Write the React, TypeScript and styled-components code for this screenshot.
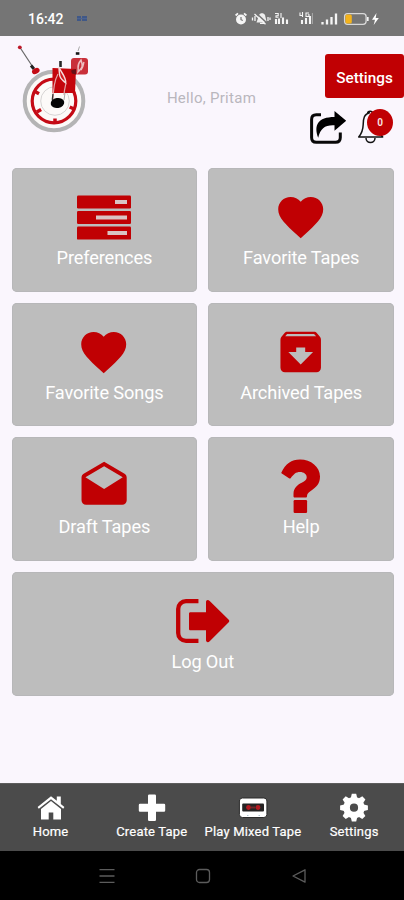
import React from "react";
import styled, { createGlobalStyle } from "styled-components";

const RED = "#c00003";

const GlobalStyle = createGlobalStyle`
  * { box-sizing: border-box; }
  body { margin: 0; background: #faf6fd; font-family: Roboto, "Liberation Sans", sans-serif; }
  button { font: inherit; border: 0; padding: 0; cursor: pointer; }
  svg { display: block; flex: none; }
`;

const Screen = styled.div`
  width: 404px;
  height: 900px;
  display: flex;
  flex-direction: column;
  overflow: hidden;
  background: #faf6fd;
`;

const StatusBar = styled.header`
  height: 36px;
  flex: none;
  display: flex;
  align-items: center;
  justify-content: space-between;
  padding: 1px 24px 0 28px;
  background: #757575;
  color: #fff;
`;

const ClockGroup = styled.div`
  display: flex;
  align-items: center;
  gap: 13px;
  font-size: 14px;
  font-weight: 500;
`;

const Header = styled.section`
  height: 132px;
  flex: none;
  display: grid;
  grid-template-columns: 110px 1fr 110px;
`;

const LogoArea = styled.div`
  padding: 4px 0 0 10px;
`;

const Greeting = styled.div`
  padding: 52px 0 0 19px;
  text-align: center;
  font-size: 15px;
  line-height: 20px;
  letter-spacing: 0.28px;
  color: #b9b7bd;
  white-space: nowrap;
`;

const HeaderActions = styled.div`
  display: flex;
  flex-direction: column;
  align-items: flex-end;
  padding-top: 18px;
`;

const SettingsButton = styled.button`
  && {
    width: 79px;
    height: 44px;
    padding-top: 3px;
    border-radius: 3px;
    background: ${RED};
    color: #fff;
    font-size: 15.3px;
    font-weight: 500;
  }
`;

const ActionRow = styled.div`
  display: flex;
  margin-top: 9px;
  padding-right: 9px;
  gap: 10px;
`;

const BellButton = styled.div`
  position: relative;
  width: 38px;
  height: 38px;
`;

const CountBadge = styled.span`
  position: absolute;
  top: 2px;
  left: 10px;
  width: 26px;
  height: 27px;
  border-radius: 50%;
  background: ${RED};
  color: #f7dede;
  font-size: 10px;
  font-weight: 700;
  line-height: 28px;
  text-align: center;
`;

const TileGrid = styled.main`
  flex: 1;
  display: grid;
  grid-template-columns: 1fr 1fr;
  grid-auto-rows: 123.8px;
  gap: 10.9px 11px;
  padding: 0 10px 0 11.5px;
`;

const Tile = styled.button<{ $wide?: boolean }>`
  grid-column: ${(p) => (p.$wide ? "1 / -1" : "auto")};
  display: flex;
  flex-direction: column;
  align-items: center;
  justify-content: flex-start;
  padding-top: 22px;
  border-radius: 5px;
  background: #bdbdbd;
  box-shadow: inset 0 0 0 1px #b7b7b9;
  color: #fff;
`;

const TileLabel = styled.span`
  margin-top: 2px;
  font-size: 18.2px;
  line-height: 24px;
  letter-spacing: -0.13px;
  white-space: nowrap;
`;

const BottomNav = styled.nav`
  height: 68px;
  flex: none;
  display: grid;
  grid-template-columns: repeat(4, 101.2px);
  background: #4b4b4b;
  border-top: 1px solid #5d5d5d;
`;

const NavItem = styled.a`
  display: flex;
  flex-direction: column;
  align-items: center;
  padding-top: 9px;
  color: #fff;
`;

const NavLabel = styled.span`
  font-size: 13px;
  line-height: 18px;
  letter-spacing: 0.18px;
  -webkit-text-stroke: 0.2px #fff;
  white-space: nowrap;
`;

const SystemBar = styled.footer`
  height: 49px;
  flex: none;
  display: flex;
  align-items: center;
  justify-content: space-between;
  padding: 0 97px 0 99px;
  background: #000;
`;

const StatusIcons = () => (
  <svg width="148" height="20" viewBox="232 9 148 20" fill="none" stroke="#f5f5f5">
    <circle cx="241" cy="19.5" r="4" fill="#f5f5f5" strokeWidth="2" />
    <path d="M235.6 15.5l2.4-2.2M246.4 15.5l-2.4-2.2" strokeWidth="1.8" />
    <path d="M241 17v2.7l1.8.8" stroke="#757575" strokeWidth="1.2" />
    <path d="M256.5 22.5h8l2-1.3-1.5-6c-1-2.6-5-2.6-6 0z" fill="#eee" stroke="none" />
    <path d="M256 13l12 11" stroke="#757575" strokeWidth="1.6" />
    <path d="M254.5 14l11 10.2M252.5 17.5v3M255 16v5M268 17v4M270 17.5v2.5M260 23.3h4" strokeWidth="1.3" />
    <path d="M275 13.5h3.2v2.2H276v1.5h2.5M281 13v5" strokeWidth="1.1" />
    <path d="M276 19v5M279 18.5V24M283 17.5V24M287 19.5V24" strokeWidth="2.1" />
    <path d="M300 12.5v3h3M302.5 12v5M309 13h-3v3.5h3v-1.7h-1.2" strokeWidth="1.1" />
    <path d="M302 20v4M306 18v6M310 16v8" strokeWidth="2.1" />
    <path d="M312.4 13v11" stroke="#aaa" strokeWidth="1" />
    <path d="M322.5 22v2.5M327 19.5v5M331.5 17v7.5M336 13.5v11" strokeWidth="2.3" />
    <rect x="344.6" y="13.7" width="21.5" height="10.6" rx="3" stroke="#d8d8d8" strokeWidth="1.3" />
    <path d="M367.8 17v4" strokeWidth="1.7" />
    <rect x="345.4" y="14.5" width="6.4" height="9" rx="1.5" fill="#f4b31b" stroke="none" />
    <path d="M376.5 13l-4.5 6.7h3l-1.3 5.3 5.1-7h-3.1z" fill="#fff" stroke="none" />
  </svg>
);

const Logo = () => (
  <svg width="90" height="96" viewBox="10 40 90 96" fill="none">
    <circle cx="54" cy="101" r="29.3" stroke="#b4b4b5" strokeWidth="4" fill="#fcfaf8" />
    <circle cx="54" cy="101" r="21.8" stroke="#c50b15" strokeWidth="3.2" />
    <circle cx="55" cy="101" r="14.3" stroke="#d7d5d4" strokeWidth="1" />
    <path d="M35 91.5l4 2.3M36.8 112l4.3-2.5M55 123v-4.5M74 109l-4.3-2" stroke="#c50b15" strokeWidth="3.5" />
    <path d="M20 47.5L33.5 68" stroke="#666" strokeWidth="1.2" />
    <circle cx="19.8" cy="47.3" r="1.9" fill="#bd1828" />
    <path d="M31 65.5l3 3.5" stroke="#222" strokeWidth="3" />
    <ellipse cx="35.8" cy="71" rx="4" ry="2.8" transform="rotate(-25 35.8 71)" fill="#c30b15" />
    <rect x="71" y="58" width="17" height="16.5" rx="3" fill="#c9303a" />
    <path d="M81 60c-5 6-2 7-3 12 5-5 5-6 3-12zM84 62c-1 2 0 4-3 8" stroke="#edbfc1" strokeWidth="1.5" />
    <path d="M75.8 53.5h3.6" stroke="#171717" strokeWidth="2.6" />
    <path d="M78 51l1.5-4.5" stroke="#aaa" />
    <path d="M52.5 68l23.5 1-1 24H52.5z" fill="#c4050c" />
    <path d="M71 70.5l5-1.5v5.5l-4-1z" fill="#671017" />
    <path d="M60.5 67v-6" stroke="#262626" strokeWidth="2.6" />
    <path d="M59 67c2 6 7 9 6.7 16-3-3-6-4-6.2-9-.4-3-.5-4-.5-7z" fill="#d31b21" stroke="#f4dddd" strokeWidth="1.4" />
    <path d="M58 74c-4 7-5 17-5 28M66 83c-1 5-2 8-2 12" stroke="#e2a4a6" strokeWidth="1.2" />
    <path d="M53 94c-1 4-1 7 0 11" stroke="#333" strokeWidth="1.3" />
    <ellipse cx="57.5" cy="103" rx="6.8" ry="5" transform="rotate(-10 57.5 103)" fill="#050505" />
    <path d="M65 93l-1 7" stroke="#aaa" />
  </svg>
);

const ShareIcon = () => (
  <svg width="38" height="38" viewBox="309 107 38 38" fill="none">
    <path d="M321 114.8h-4.7c-3 0-4.7 1.7-4.7 4.7v18c0 3 1.7 4.8 4.7 4.8h19.2c3 0 4.8-1.8 4.8-4.8v-5" stroke="#080808" strokeWidth="3" />
    <path d="M334.5 111l11.7 9.7-11.7 10v-5.5c-9.5-.5-14 3-16.3 12.5-4.6-12-.5-20.6 16.3-20.6z" fill="#000" />
  </svg>
);

const BellIcon = () => (
  <svg width="38" height="38" viewBox="357 107 38 38" fill="none" stroke="#111" strokeWidth="1.5" strokeLinejoin="round">
    <path d="M370 112.5c-6 1.5-6.7 6-6.8 12-.2 6-1.5 9-4.5 12.5h24c-3-3.5-4-7-4.3-12M366 138c0 6 9 6 9 0M367.5 113.8c.2-3.5 5-3.5 5.3 0" />
  </svg>
);

const TileSvg = ({ children }: { children: React.ReactNode }) => (
  <svg width="54" height="54" viewBox="0 0 54 54" fill={RED}>{children}</svg>
);

const PreferencesIcon = () => (
  <TileSvg>
    <rect x="0" y="5.5" width="54" height="13" rx="1.2" />
    <rect x="0" y="21" width="54" height="13" rx="1.2" />
    <rect x="0" y="36.6" width="54" height="13" rx="1.2" />
    <path fill="#d9c3c3" d="M38 10h12v4H38zM19 25.5h31v4H19zM30.5 41H50v4H30.5z" />
  </TileSvg>
);

const HeartIcon = () => (
  <TileSvg>
    <path transform="translate(-.3 .2) scale(2.25)" d="M12 21.35l-1.45-1.32C5.4 15.36 2 12.28 2 8.5 2 5.42 4.42 3 7.5 3c1.74 0 3.41.81 4.5 2.09C13.09 3.81 14.76 3 16.5 3 19.58 3 22 5.42 22 8.5c0 3.78-3.4 6.86-8.55 11.54L12 21.35z" />
  </TileSvg>
);

const ArchiveIcon = () => (
  <TileSvg>
    <path transform="translate(-.3 0) scale(2.25)" d="M20.54 5.23l-1.39-1.68C18.88 3.21 18.47 3 18 3H6c-.47 0-.88.21-1.16.55L3.46 5.23C3.17 5.57 3 6.02 3 6.5V19c0 1.1.9 2 2 2h14c1.1 0 2-.9 2-2V6.5c0-.48-.17-.93-.46-1.27zM12 17.5L6.5 12H10v-2h4v2h3.5L12 17.5zM5.12 5l.81-1h12l.94 1H5.12z" />
  </TileSvg>
);

const DraftIcon = () => (
  <TileSvg>
    <path transform="translate(0 .5) scale(2.26)" d="M21.99 8c0-.72-.37-1.35-.94-1.7L12 1 2.95 6.3C2.38 6.65 2 7.28 2 8v10c0 1.1.9 2 2 2h16c1.1 0 2-.9 2-2l-.01-10zM12 13L3.74 7.84 12 3l8.26 4.84L12 13z" />
  </TileSvg>
);

const HelpIcon = () => (
  <TileSvg>
    <path d="M7.4 13.5C11.5 5 17.5.6 26 .6c11 0 20 7.4 20 17 0 7-3.5 10.8-9.3 14.3-2.6 1.6-3.7 3.2-3.7 5.3 0 .8-.5 1.3-1.3 1.3H20.8c-.8 0-1.3-.5-1.3-1.3v-2.5c0-5.3 3.8-9 8.2-11 3.4-1.6 5-3.1 5-5.5 0-3-3-5.2-6.6-5.2-4.5 0-6.2 2.1-9.3 6-.5.6-1.2.7-1.8.2l-7.2-4.6c-.6-.4-.7-.7-.4-1.1z" />
    <rect x="19.6" y="41" width="13.5" height="13" rx="1.2" />
  </TileSvg>
);

const LogoutIcon = () => (
  <TileSvg>
    <path d="M20.3 7.2H10c-4.5 0-7.8 3.3-7.8 7.8v24c0 4.5 3.3 7.8 7.8 7.8h10.3" fill="none" stroke={RED} strokeWidth="4.3" strokeLinecap="square" />
    <path d="M14.5 18.2H30V8.3c0-2.3 2-2.9 3.7-1.2l18.8 18.4c1 1 1 2 0 3L33.7 47.3c-1.7 1.7-3.7 1-3.7-1.2v-9.9H14.5c-1 0-1.5-.5-1.5-1.5v-15c0-1 .5-1.5 1.5-1.5z" />
  </TileSvg>
);

const NavSvg = ({ children }: { children: React.ReactNode }) => (
  <svg width="30" height="30" viewBox="0 0 30 30" fill="#fff">{children}</svg>
);

const HomeIcon = () => (
  <NavSvg>
    <path d="M15 3.2L1.6 14.1l1.2 1.6L15 6.3l12.2 9.4 1.2-1.6-3.6-3V3.6h-4v4.2z" />
    <path d="M15 8L5 16v10.5h7.7v-7h4.6v7H25V16z" />
  </NavSvg>
);

const PlusIcon = () => (
  <NavSvg>
    <path d="M12.2 1.5h5.6q1.2 0 1.2 1.2v8h8q1.2 0 1.2 1.2v5.7q0 1.2-1.2 1.2h-8v8q0 1.2-1.2 1.2h-5.6q-1.2 0-1.2-1.2v-8H3q-1.2 0-1.2-1.2v-5.7q0-1.2 1.2-1.2h8v-8q0-1.2 1.2-1.2z" />
  </NavSvg>
);

const CassetteIcon = () => (
  <NavSvg>
    <rect x="1.4" y="5" width="27.5" height="19.5" rx="3" stroke="#2b2b2b" strokeWidth="1" />
    <rect x="4.2" y="10.5" width="21.8" height="8" rx="1" fill="#252323" />
    <circle cx="10.5" cy="14.5" r="2.4" fill="#b41a21" />
    <circle cx="20" cy="14.5" r="2.4" fill="#b41a21" />
    <path d="M13 14.5h4.5" stroke="#71272a" strokeWidth="2" />
    <path d="M9 22.5h1.5M20.5 22.5H22" stroke="#b1c6d1" />
  </NavSvg>
);

const GearIcon = () => (
  <NavSvg>
    <circle cx="15" cy="14.7" r="7.4" fill="none" stroke="#fff" strokeWidth="6.6" />
    {[0, 45, 90, 135, 180, 225, 270, 315].map((angle) => (
      <path key={angle} transform={`rotate(${angle} 15 14.7)`} d="M11.8 5l1-4.2h4.4l1 4.2z" />
    ))}
  </NavSvg>
);

const tiles = [
  { label: "Preferences", Icon: PreferencesIcon },
  { label: "Favorite Tapes", Icon: HeartIcon },
  { label: "Favorite Songs", Icon: HeartIcon },
  { label: "Archived Tapes", Icon: ArchiveIcon },
  { label: "Draft Tapes", Icon: DraftIcon },
  { label: "Help", Icon: HelpIcon },
  { label: "Log Out", Icon: LogoutIcon, wide: true },
];

const navItems = [
  { label: "Home", Icon: HomeIcon },
  { label: "Create Tape", Icon: PlusIcon },
  { label: "Play Mixed Tape", Icon: CassetteIcon },
  { label: "Settings", Icon: GearIcon },
];

export default function App() {
  return (
    <>
      <GlobalStyle />
      <Screen>
        <StatusBar>
          <ClockGroup>
            16:42
            <svg width="10" height="6" viewBox="0 0 10 6">
              <path d="M0 0h4v5H0zM5 0h5v5H5z" fill="#405887" />
              <path d="M0 2.5h10" stroke="#4d6390" />
            </svg>
          </ClockGroup>
          <StatusIcons />
        </StatusBar>
        <Header>
          <LogoArea><Logo /></LogoArea>
          <Greeting>Hello, Pritam</Greeting>
          <HeaderActions>
            <SettingsButton>Settings</SettingsButton>
            <ActionRow>
              <ShareIcon />
              <BellButton>
                <BellIcon />
                <CountBadge>0</CountBadge>
              </BellButton>
            </ActionRow>
          </HeaderActions>
        </Header>
        <TileGrid>
          {tiles.map(({ label, Icon, wide }) => (
            <Tile key={label} $wide={wide}>
              <Icon />
              <TileLabel>{label}</TileLabel>
            </Tile>
          ))}
        </TileGrid>
        <BottomNav>
          {navItems.map(({ label, Icon }) => (
            <NavItem key={label}>
              <Icon />
              <NavLabel>{label}</NavLabel>
            </NavItem>
          ))}
        </BottomNav>
        <SystemBar>
          <svg width="16" height="16" viewBox="0 0 16 16" stroke="#5c5c5c" strokeWidth="1.3">
            <path d="M.5 1.7h15M.5 8h15M.5 14.3h15" />
          </svg>
          <svg width="16" height="16" viewBox="0 0 16 16" fill="none" stroke="#5c5c5c" strokeWidth="1.3">
            <rect x="1.5" y="1.5" width="13" height="13" rx="3" />
          </svg>
          <svg width="16" height="16" viewBox="0 0 16 16" fill="none" stroke="#5c5c5c" strokeWidth="1.3" strokeLinejoin="round">
            <path d="M14 1.8v12.4L2 8z" />
          </svg>
        </SystemBar>
      </Screen>
    </>
  );
}
